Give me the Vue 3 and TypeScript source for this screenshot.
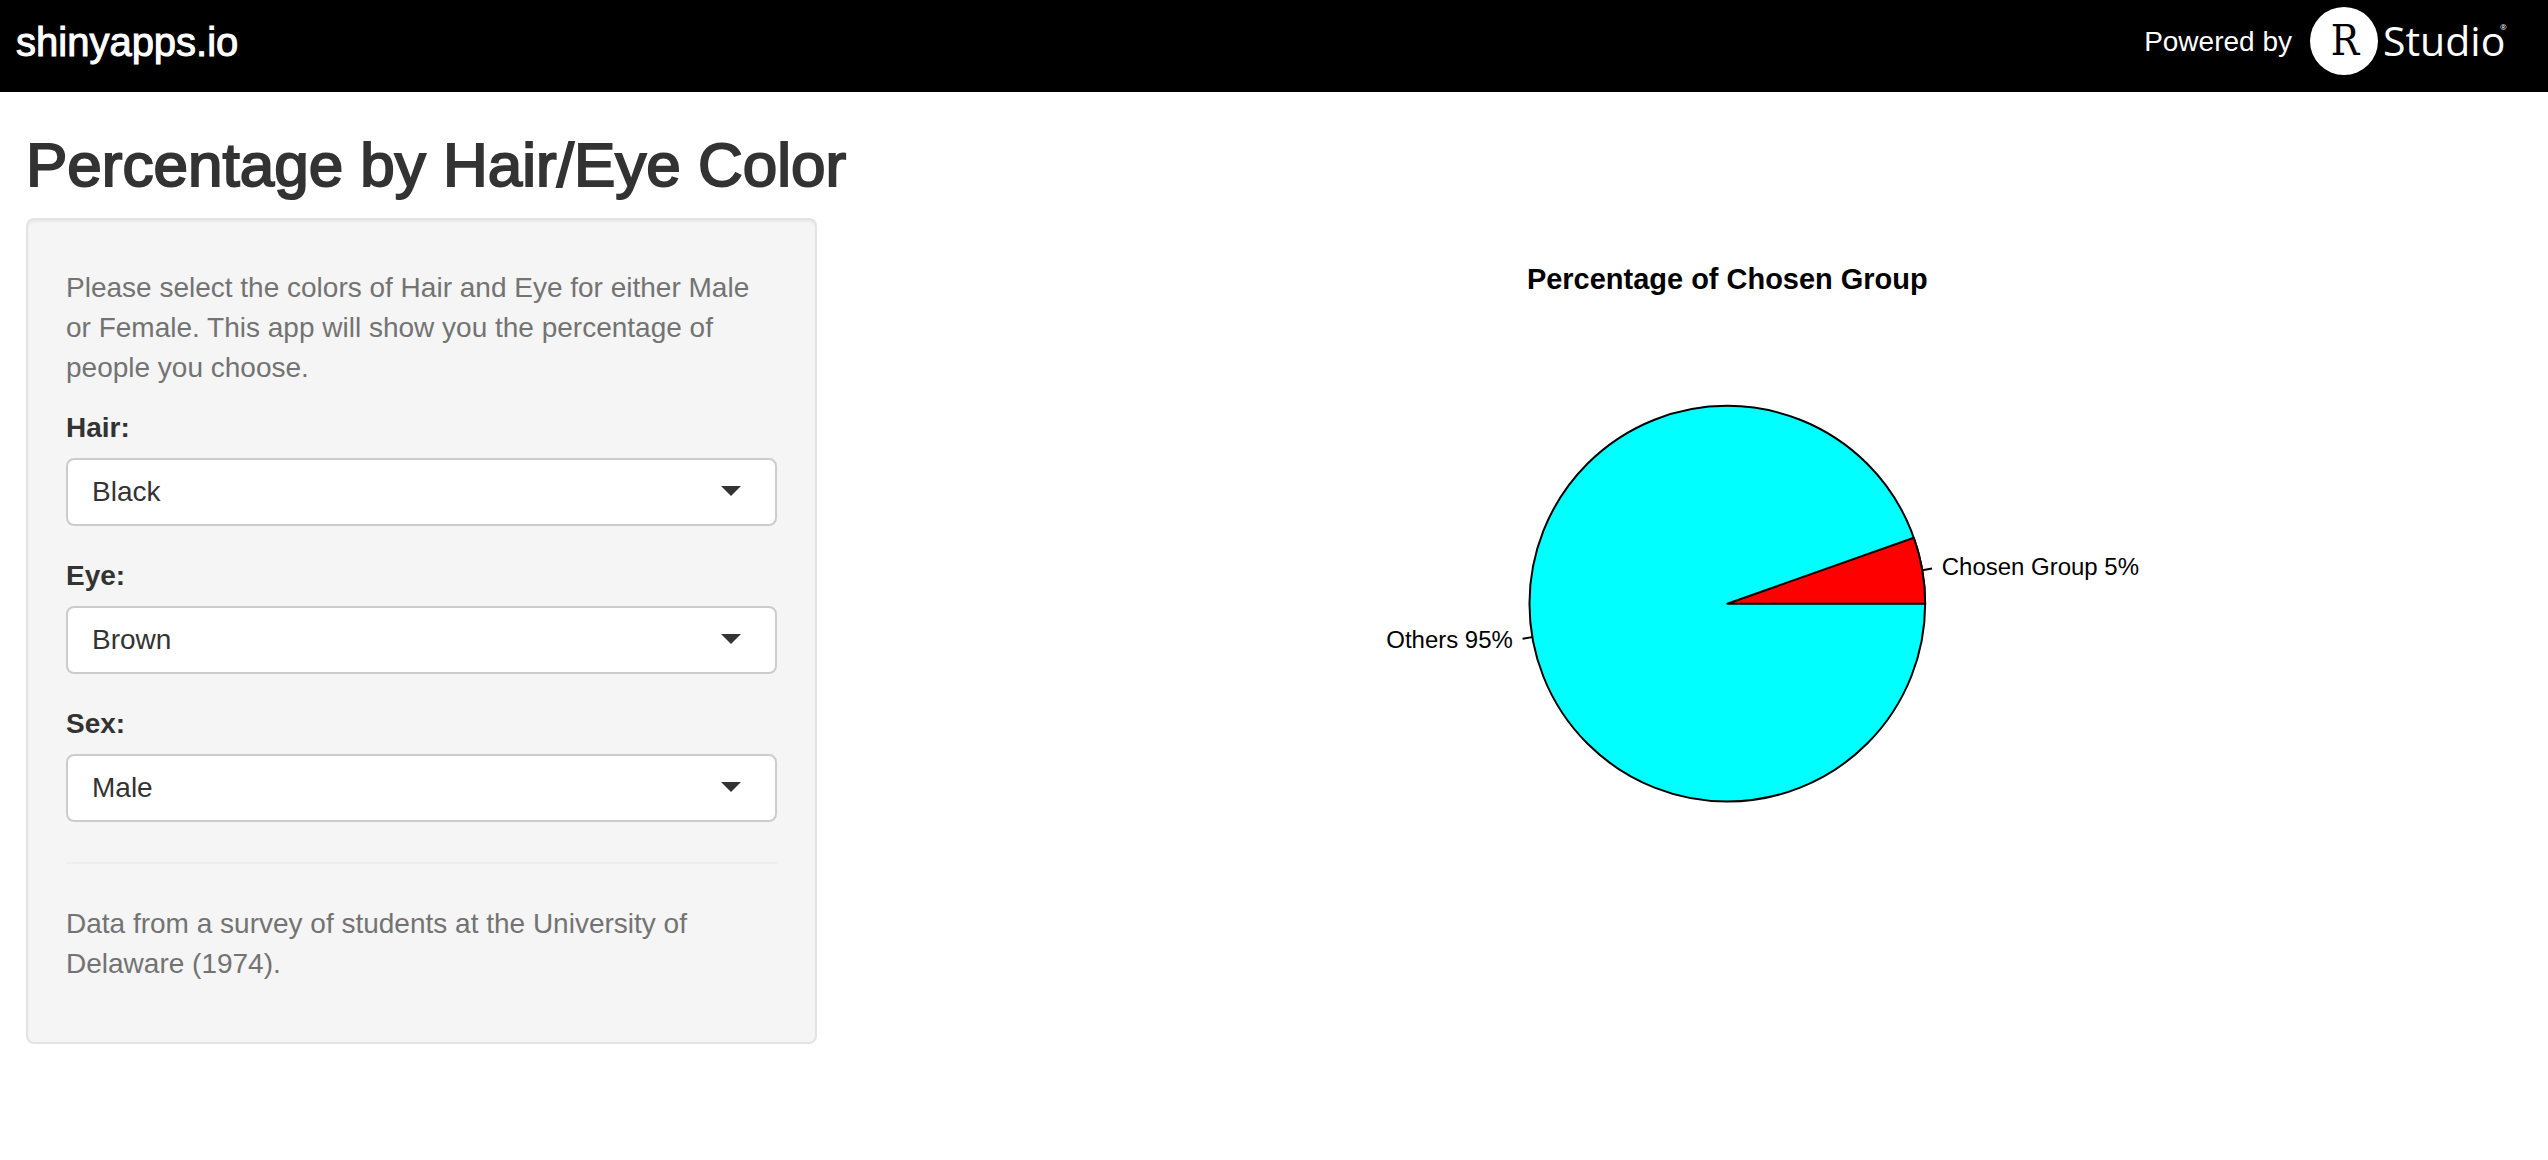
<script setup lang="ts">
import { computed, reactive } from 'vue'

type Sex = 'Male' | 'Female'

interface Field {
  key: 'hair' | 'eye' | 'sex'
  label: string
  options: string[]
}

const hairColors = ['Black', 'Brown', 'Red', 'Blond']
const eyeColors = ['Brown', 'Blue', 'Hazel', 'Green']

const fields: Field[] = [
  { key: 'hair', label: 'Hair:', options: hairColors },
  { key: 'eye', label: 'Eye:', options: eyeColors },
  { key: 'sex', label: 'Sex:', options: ['Male', 'Female'] },
]

// Rows are hair colors, columns are eye colors.
const counts: Record<Sex, number[][]> = {
  Male: [[32, 11, 10, 3], [53, 50, 25, 15], [10, 10, 7, 7], [3, 30, 5, 8]],
  Female: [[36, 9, 5, 2], [66, 34, 29, 14], [16, 7, 7, 7], [4, 64, 5, 8]],
}

const chosen = reactive({ hair: 'Black', eye: 'Brown', sex: 'Male' })

const total = Object.values(counts).flat(2).reduce((a, b) => a + b, 0)

const share = computed(() => {
  const table = counts[chosen.sex as Sex]
  return table[hairColors.indexOf(chosen.hair)][eyeColors.indexOf(chosen.eye)] / total
})
const percent = computed(() => Math.round(share.value * 100))

const cx = 849
const cy = 386
const radius = 198

function at(angle: number, scale = 1) {
  return { x: cx + radius * scale * Math.cos(angle), y: cy - radius * scale * Math.sin(angle) }
}

function tick(angle: number) {
  const a = at(angle)
  const b = at(angle, 1.05)
  return { x1: a.x, y1: a.y, x2: b.x, y2: b.y }
}

const wedge = computed(() => {
  const end = at(share.value * 2 * Math.PI)
  return `M${cx} ${cy}H${cx + radius}A${radius} ${radius} 0 0 0 ${end.x} ${end.y}Z`
})
const chosenAngle = computed(() => share.value * Math.PI)
const othersAngle = computed(() => chosenAngle.value + Math.PI)
</script>

<template>
  <div class="page">
    <header class="bar">
      <a class="brand" href="#">shinyapps.io</a>
      <a class="powered" href="#">
        <span>Powered by</span>
        <svg class="logo" viewBox="0 0 200 72" role="img" aria-label="RStudio">
          <circle cx="36" cy="36" r="34" fill="#fff" />
          <text class="logo-r" x="37" y="50" text-anchor="middle">R</text>
          <text class="logo-word" x="75" y="51">Studio</text>
          <text class="logo-mark" x="192" y="25">®</text>
        </svg>
      </a>
    </header>

    <h2 class="title">Percentage by Hair/Eye Color</h2>

    <div class="columns">
      <div class="side">
        <form class="well" @submit.prevent>
          <p class="help">
            Please select the colors of Hair and Eye for either Male or Female. This app will show
            you the percentage of people you choose.
          </p>
          <div v-for="f in fields" :key="f.key" class="group">
            <label :for="f.key">{{ f.label }}</label>
            <div class="picker">
              <select :id="f.key" v-model="chosen[f.key]">
                <option v-for="o in f.options" :key="o" :value="o">{{ o }}</option>
              </select>
            </div>
          </div>
          <hr />
          <p class="help">Data from a survey of students at the University of Delaware (1974).</p>
        </form>
      </div>

      <main class="plot">
        <svg viewBox="0 0 1640 800" role="img" aria-label="Percentage of Chosen Group">
          <text class="plot-title" :x="cx" y="71" text-anchor="middle">Percentage of Chosen Group</text>
          <g stroke="#000" stroke-width="2" stroke-linejoin="round">
            <circle :cx="cx" :cy="cy" :r="radius" fill="#0ff" />
            <path :d="wedge" fill="#f00" />
            <line v-bind="tick(chosenAngle)" />
            <line v-bind="tick(othersAngle)" />
          </g>
          <text class="plot-label" :x="at(chosenAngle, 1.1).x" :y="at(chosenAngle, 1.1).y + 8">
            Chosen Group {{ percent }}%
          </text>
          <text
            class="plot-label"
            text-anchor="end"
            :x="at(othersAngle, 1.1).x"
            :y="at(othersAngle, 1.1).y + 8"
          >
            Others {{ 100 - percent }}%
          </text>
        </svg>
      </main>
    </div>
  </div>
</template>

<style>
body {
  margin: 0;
  background: #fff;
}
</style>

<style scoped>
.page {
  font: 28px/40px "Liberation Sans", Arial, sans-serif;
  color: #333;
}
.bar {
  display: flex;
  justify-content: space-between;
  height: 92px;
  padding: 0 40px 0 16px;
  background: #000;
}
.bar a {
  color: #fff;
  text-decoration: none;
}
.brand {
  font-size: 40px;
  line-height: 84px;
  -webkit-text-stroke: 1px #fff;
}
.powered {
  display: flex;
  gap: 16px;
  line-height: 84px;
}
.logo {
  width: 200px;
  height: 72px;
  margin-top: 5px;
}
.logo-r {
  font: 42px "DejaVu Serif Condensed", "DejaVu Serif", serif;
  font-stretch: condensed;
  fill: #000;
}
.logo-word {
  font: 41px "Open Sans", sans-serif;
  fill: #fff;
}
.logo-mark {
  font: 8px "Open Sans", sans-serif;
  fill: #fff;
}
.title {
  margin: 40px 26px 20px;
  font-size: 62px;
  font-weight: 400;
  line-height: 66px;
  -webkit-text-stroke: 2px #333;
}
.columns {
  display: grid;
  grid-template-columns: 1fr 2fr;
}
.side {
  padding: 0 32px 0 26px;
}
.well {
  padding: 38px;
  border: 2px solid #e3e3e3;
  border-radius: 8px;
  background: #f5f5f5;
  box-shadow: inset 0 2px 2px rgba(0, 0, 0, 0.05);
}
.help {
  margin: 10px 0 20px;
  color: #737373;
}
.group {
  margin-bottom: 30px;
}
.group label {
  display: block;
  margin-bottom: 10px;
  font-weight: 700;
}
.picker {
  position: relative;
}
.picker::after {
  content: "";
  position: absolute;
  top: 28px;
  right: 36px;
  border: 10px solid transparent;
  border-top-color: #333;
  border-bottom: 0;
  pointer-events: none;
}
.picker select {
  display: block;
  width: 100%;
  height: 68px;
  padding: 0 72px 0 24px;
  border: 2px solid #ccc;
  border-radius: 8px;
  background: #fff;
  color: #333;
  font: inherit;
  appearance: none;
}
hr {
  margin: 40px 0;
  border: 0;
  border-top: 2px solid #eee;
}
.plot {
  padding: 0 30px;
}
.plot svg {
  display: block;
  width: 100%;
}
.plot text {
  fill: #000;
}
.plot-title {
  font-size: 29px;
  font-weight: 700;
}
.plot-label {
  font-size: 24px;
}
</style>
